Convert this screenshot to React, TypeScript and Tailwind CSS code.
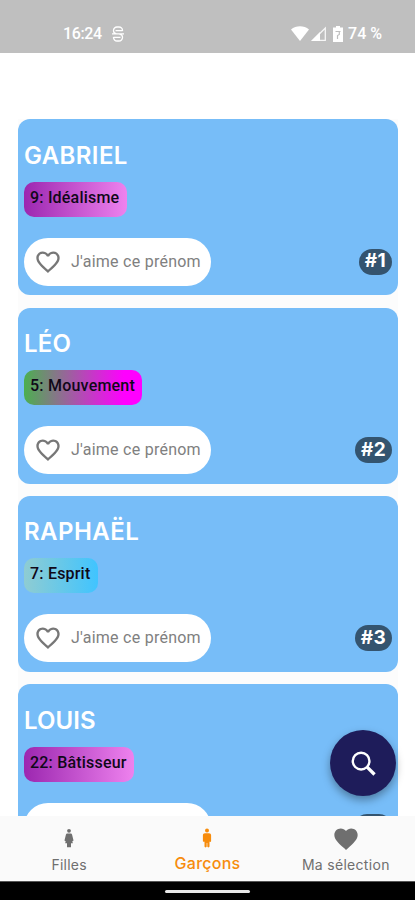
import React from "react";
import { MdFavorite, MdFavoriteBorder } from "react-icons/md";

// ─── Data ────────────────────────────────────────────────────────────────────

interface FirstName {
  rank: number;
  name: string;
  trait: string;
  /** Letter spacing of the name */
  nameClass: string;
  /** Width and gradient of the trait tag */
  tagClass: string;
}

const names: FirstName[] = [
  {
    rank: 1,
    name: "GABRIEL",
    trait: "9: Idéalisme",
    nameClass: "tracking-[0.4px]",
    tagClass: "w-[103px] from-[#9c27b0] to-[#ee82ee] tracking-[0.2px]",
  },
  {
    rank: 2,
    name: "LÉO",
    trait: "5: Mouvement",
    nameClass: "tracking-[0.2px]",
    tagClass: "w-[118px] from-[#4caf50] to-[#ff00ff] to-85% tracking-[0.22px]",
  },
  {
    rank: 3,
    name: "RAPHAËL",
    trait: "7: Esprit",
    nameClass: "tracking-[0.45px]",
    tagClass: "w-[74px] from-[#8fccd2] to-[#40c4ff] tracking-[0.2px]",
  },
  {
    rank: 4,
    name: "LOUIS",
    trait: "22: Bâtisseur",
    nameClass: "tracking-[0.1px]",
    tagClass: "w-[110px] from-[#9c27b0] to-[#ee82ee] tracking-[0.2px]",
  },
];

// ─── Icons ───────────────────────────────────────────────────────────────────

function WomanIcon() {
  return (
    <svg className="h-5 w-3" viewBox="0 0 12 20" fill="currentColor">
      <circle cx="6" cy="2.800" r="1.900" />
      <path d="M4.600 5.500h2.800c1 0 1.500.500 1.700 1.300L10.400 12c.200.900-.600 1.300-1.100.700l.500 2.600H8v4H4v-4H2.200l.500-2.600c-.500.600-1.300.200-1.100-.700l1.300-5.200c.200-.800.700-1.300 1.700-1.300Z" />
    </svg>
  );
}

function ManIcon() {
  return (
    <svg className="h-5 w-3" viewBox="0 0 12 20" fill="currentColor">
      <circle cx="6" cy="2.600" r="2" />
      <path d="M4 5.300h4c1.300 0 2.100.800 2.100 2V13c0 1-1.300 1.100-1.600.600v5c0 1.100-2.200 1.100-2.200 0V15h-.600v3.600c0 1.100-2.200 1.100-2.200 0v-5c-.300.500-1.600.400-1.600-.600V7.300c0-1.200.800-2 2.100-2Z" />
    </svg>
  );
}

function SearchIcon() {
  return (
    <svg className="size-[25px]" viewBox="0 0 24 24" fill="none" stroke="currentColor" strokeWidth="2.300">
      <circle cx="9.700" cy="9.700" r="8" />
      <path d="m15.300 15.300 7.300 7.300" strokeWidth="3.200" />
    </svg>
  );
}

// ─── StatusBar ───────────────────────────────────────────────────────────────

function StatusBar() {
  return (
    <header className="flex h-[53px] shrink-0 items-center justify-between bg-[#bfbfbf] pt-[14px] pr-[33px] pl-[63px] font-['Roboto',sans-serif] text-base font-medium text-white">
      <div className="flex items-center gap-2.5">
        <span className="tracking-[-0.4px]">16:24</span>
        <svg className="h-4 w-3" viewBox="0 0 12 16" fill="none" stroke="currentColor" strokeWidth="1.300">
          <path d="M10.500 5V4.500A3.500 3.500 0 0 0 7 1H5a3.500 3.500 0 0 0-3.500 3.500V5c0 1.800 1.500 2.500 3 2.800M1.500 11v.500A3.500 3.500 0 0 0 5 15h2a3.500 3.500 0 0 0 3.500-3.500V11c0-1.800-1.500-2.500-3-2.800M0 7.900h12M3.500 4.700h7M1.500 11.300h7" />
        </svg>
      </div>
      <div className="flex items-center">
        <svg className="h-[15px] w-[18px]" viewBox="0 0 18 15" fill="currentColor">
          <path d="M0 3.500C5-.900 13-.900 18 3.500L9 15Z" />
        </svg>
        <svg className="ml-0.5 h-[15px] w-[15px]" viewBox="0 0 15 15" fill="none">
          <path d="M0 15 9 6v9Z" fill="#fff" />
          <path d="M2 14.300 14.300 2v12.300Z" stroke="#fff" strokeOpacity="0.85" strokeWidth="1.300" />
        </svg>
        <svg className="ml-[7px] h-4 w-2.5" viewBox="0 0 10 16">
          <path d="M3 0h4v1.500h3V16H0V1.500h3Z" fill="#fff" />
          <path d="M2.500 5.500h5M6.300 5.500v3L4.500 9.500v3.500" fill="none" stroke="#bfbfbf" strokeWidth="1.200" />
        </svg>
        <span className="ml-[5px]">74 %</span>
      </div>
    </header>
  );
}

// ─── NameCard ────────────────────────────────────────────────────────────────

function NameCard({ item }: { item: FirstName }) {
  return (
    <li className="flex h-44 shrink-0 flex-col rounded-xl bg-[#77bdf8] px-1.5 pt-[22.400px] pb-[9.600px]">
      <h2
        className={`h-7 font-['Inter',sans-serif] text-[24px] leading-7 font-semibold text-white ${item.nameClass}`}
      >
        {item.name}
      </h2>
      <span
        className={`mt-3 h-[35px] rounded-[10px] bg-linear-to-r/srgb pl-1.5 font-['Roboto',sans-serif] text-base leading-[32px] font-medium whitespace-nowrap text-[#100818] ${item.tagClass}`}
      >
        {item.trait}
      </span>
      <div className="mt-auto flex items-center justify-between">
        <button
          type="button"
          className="flex h-12 w-[187px] items-center rounded-full bg-white pl-[10px] font-['Roboto',sans-serif] text-base tracking-[0.25px] whitespace-nowrap text-[#808080]"
        >
          <MdFavoriteBorder className="mr-[9px] size-7 shrink-0 text-[#777]" />
          J&apos;aime ce prénom
        </button>
        <span className="flex h-[26px] items-center rounded-full bg-[#34546f] px-1.5 font-['Inter',sans-serif] text-[19px] font-bold tracking-[0.3px] text-white">
          #{item.rank}
        </span>
      </div>
    </li>
  );
}

// ─── TabBar ──────────────────────────────────────────────────────────────────

function TabBar() {
  return (
    <nav className="grid h-[65px] shrink-0 grid-cols-3 bg-[#fafafa] font-['Inter',sans-serif] text-[#6f6f6f]">
      <a className="flex flex-col items-center pt-3">
        <WomanIcon />
        <span className="mt-[7px] text-sm leading-5 tracking-[0.2px]">Filles</span>
      </a>
      <a className="flex flex-col items-center pt-3 text-[#f78c0c]">
        <ManIcon />
        <span className="mt-[5px] text-base leading-5 font-medium tracking-[0.25px]">Garçons</span>
      </a>
      <a className="flex flex-col items-center pt-[9px]">
        <MdFavorite className="size-7" />
        <span className="mt-0.5 text-sm leading-5 tracking-[0.3px]">Ma sélection</span>
      </a>
    </nav>
  );
}

export default function App() {
  return (
    <div className="flex h-[900px] w-[415px] flex-col overflow-hidden bg-white">
      <StatusBar />
      <main className="relative min-h-0 flex-1 overflow-hidden pt-[66.300px] pr-[17px] pl-[18px]">
        <ul className="flex flex-col gap-[12.400px] bg-[#fcfcfc]">
          {names.map((item) => (
            <NameCard key={item.rank} item={item} />
          ))}
        </ul>
        <button
          type="button"
          aria-label="Rechercher"
          className="absolute right-[19px] bottom-5 flex size-[66px] items-center justify-center rounded-full bg-[#1e1c5a] text-white shadow-[0_4px_8px_rgba(0,0,0,0.35)]"
        >
          <SearchIcon />
        </button>
      </main>
      <TabBar />
      <footer className="flex h-[19px] shrink-0 justify-center border-t border-[#555] bg-black pt-2">
        <div className="h-[3px] w-[85px] rounded-full bg-[#e8e8e8]" />
      </footer>
    </div>
  );
}
